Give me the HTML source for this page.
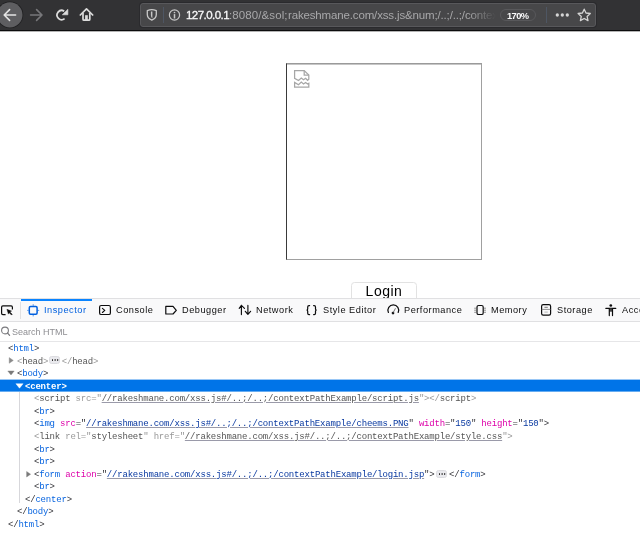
<!DOCTYPE html>
<html><head><meta charset="utf-8">
<style>
*{margin:0;padding:0;box-sizing:border-box}
html,body{width:640px;height:558px;overflow:hidden;background:#fff;font-family:"Liberation Sans",sans-serif;position:relative}
.abs{position:absolute}
#tb{left:0;top:0;width:640px;height:30px;background:#323234}
#tbline{left:0;top:30px;width:640px;height:1px;background:#0c0c0d}
#urlbar{left:140px;top:3px;width:456px;height:24px;background:#474749;border:1px solid #58585b;border-radius:3px}
.urltxt{font-size:11.5px;white-space:nowrap;line-height:14px;will-change:transform}
#dt{left:0;top:298px;width:640px;height:260px;background:#fff}
#dttb{left:0;top:298px;width:640px;height:24px;background:#f9f9fa;border-top:1px solid #e0e0e2;border-bottom:1px solid #e0e0e2}
.tab{position:absolute;will-change:transform;top:305.2px;font-size:9.2px;letter-spacing:0.52px;line-height:10px;color:#0c0c0d;white-space:nowrap}
.mk{position:absolute;will-change:transform;font-family:"Liberation Mono",monospace;font-size:9px;letter-spacing:-0.2px;white-space:nowrap;line-height:12px;color:#38383d}
.t{color:#0a66e0}
.an{color:#dd00a9}
.av{color:#0838a0}
.ul{text-decoration:underline;text-decoration-color:rgba(120,120,140,0.75)}
.nd{color:#999}
.badge{width:11px;height:8px;border:1px solid #dcdce0;border-radius:2.5px;background:#e9e9ed}
.badge::after{content:"";position:absolute;left:1.9px;top:2.4px;width:1.5px;height:1.5px;background:#222;border-radius:50%;box-shadow:2.6px 0 0 #222,5.2px 0 0 #222}
.nd .tg{color:#555}
.nd .av{color:#555}
</style></head><body>
<!-- browser toolbar -->
<div class="abs" id="tb"></div>
<div class="abs" id="tbline"></div>
<div class="abs" style="left:0;top:31px;width:640px;height:1px;background:#b4b4b4"></div>
<svg class="abs" style="left:0;top:0" width="140" height="30" viewBox="0 0 140 30">
  <circle cx="9.9" cy="14.8" r="13.4" fill="#202022"/>
  <circle cx="9.9" cy="14.8" r="12.6" fill="#5e5e61"/>
  <path d="M15.6 15 H4.6 M9.6 9.6 L4.2 15 L9.6 20.4" stroke="#e4e4e4" stroke-width="1.6" fill="none" stroke-linecap="round" stroke-linejoin="round"/>
  <path d="M30.6 15 H41.6 M36.6 9.6 L42 15 L36.6 20.4" stroke="#77777a" stroke-width="1.6" fill="none" stroke-linecap="round" stroke-linejoin="round"/>
  <path d="M64.6 18.6 A4.6 4.6 0 1 1 64.2 11.2" stroke="#dcdcdc" stroke-width="1.7" fill="none"/>
  <path d="M67.9 9.3 V14.8 H62.3 Z" fill="#dcdcdc" stroke="#dcdcdc" stroke-width="0.6" stroke-linejoin="round"/>
  <path d="M80.3 15 L86.5 8.8 L92.7 15" stroke="#dcdcdc" stroke-width="1.7" fill="none" stroke-linecap="round" stroke-linejoin="round"/>
  <path d="M83 13 V19.2 Q83 20.2 84 20.2 H88.8 Q89.8 20.2 89.8 19.2 V13" stroke="#dcdcdc" stroke-width="1.7" fill="none"/>
  <rect x="85.1" y="15.2" width="2.7" height="5" fill="#dcdcdc"/>
</svg>
<div class="abs" style="left:139px;top:2px;width:458px;height:26px;border-radius:4px;background:#2a2a2d"></div>
<div class="abs" id="urlbar"></div>
<svg class="abs" style="left:140px;top:0" width="60" height="30" viewBox="140 0 60 30">
  <path d="M151.8 9.6 Q154 9.6 156.3 10.6 V14.6 Q156.3 18.4 151.8 20.2 Q147.3 18.4 147.3 14.6 V10.6 Q149.6 9.6 151.8 9.6 Z" stroke="#c8c8c8" stroke-width="1.3" fill="none" stroke-linejoin="round"/>
  <path d="M150.9 11.6 Q151.6 11.4 152.4 11.6 V18.4 Q150.9 17.4 150.9 15 Z" fill="#c8c8c8"/>
  <rect x="163" y="7" width="1" height="16" fill="#4e5663"/>
  <circle cx="174.5" cy="15" r="5.1" stroke="#c8c8c8" stroke-width="1.2" fill="none"/>
  <rect x="173.75" y="14.1" width="1.5" height="4.4" fill="#c8c8c8"/>
  <circle cx="174.5" cy="12.5" r="0.85" fill="#c8c8c8"/>
</svg>
<div class="abs" style="left:186px;top:0;width:312px;height:30px;overflow:hidden;-webkit-mask-image:linear-gradient(to right,#000 282px,transparent 310px)">
<div class="abs urltxt" style="left:0.3px;top:7.5px;color:#f9f9fa;letter-spacing:-0.55px;-webkit-text-stroke:0.3px #f9f9fa">127.0.0.1</div>
<div class="abs urltxt" style="left:42.8px;top:7.5px;color:#a8a8aa;letter-spacing:0.1px">:8080/&amp;sol;</div>
<div class="abs urltxt" style="left:101.75px;top:7.5px;color:#a8a8aa;letter-spacing:-0.15px">rakeshmane.com/xss.js&amp;num;/..;/..;/contextPathExample</div>
</div>
<div class="abs" style="left:500px;top:9px;width:36px;height:12px;border:1px solid #58585b;border-radius:6px"></div>
<div class="abs urltxt" style="left:500px;top:8.5px;width:36px;text-align:center;color:#f9f9fa;font-size:9.3px;font-weight:bold;letter-spacing:-0.55px;text-indent:-0.5px">170%</div>
<div class="abs" style="left:546px;top:7px;width:1px;height:16px;background:#4e5663"></div>
<svg class="abs" style="left:550px;top:0" width="46" height="30" viewBox="550 0 46 30">
  <circle cx="557.3" cy="15" r="1.65" fill="#d4d4d4"/>
  <circle cx="562.3" cy="15" r="1.65" fill="#d4d4d4"/>
  <circle cx="567.3" cy="15" r="1.65" fill="#d4d4d4"/>
  <path d="M584.2 9.2 L586 13 L590.3 13.5 L587.1 16.4 L588 20.6 L584.2 18.5 L580.4 20.6 L581.3 16.4 L578.1 13.5 L582.4 13 Z" stroke="#d4d4d4" stroke-width="1.3" fill="none" stroke-linejoin="round"/>
</svg>
<!-- page -->
<div class="abs" style="left:286px;top:63px;width:196px;height:197px;border-style:solid;border-width:1px;border-color:#9a9a9a #a0a0a0 #a0a0a0 #3a3a3a"></div>
<div class="abs" style="left:287px;top:64px;width:194px;height:1px;background:#c6c6c6"></div>
<svg class="abs" style="left:290px;top:66px" width="24" height="26" viewBox="290 66 24 26">
  <g stroke="#a6a6a6" stroke-width="1.25" fill="none" stroke-linejoin="miter">
  <path d="M294.6 78.4 V70.6 H304.2 L308.8 75 V79.2 L307.6 80.3 L305.6 78.3 L303.5 79.8 L301.3 78 L298.5 80.5 Z"/>
  <path d="M304.2 70.6 V75.1 H308.8"/>
  <path d="M294.6 87.2 V82.4 L298.5 84.7 L301.3 82.1 L303.5 83.9 L305.6 82.5 L307.6 84.1 L308.8 83.3 V87.2 Z"/>
  </g>
</svg>
<div class="abs" style="left:351px;top:282px;width:66px;height:24px;border:1px solid #e2e2e2;border-radius:3.5px;background:#fff"></div>
<div class="abs" style="left:351px;top:283px;width:66px;text-align:center;font-size:14px;line-height:16px;color:#000;letter-spacing:0.5px;will-change:transform">Login</div>

<!-- devtools -->
<div class="abs" id="dt"></div>
<div class="abs" id="dttb"></div>
<div class="abs" style="left:21px;top:299px;width:71px;height:2px;background:#0a84ff"></div>
<div class="abs" style="left:20px;top:302px;width:1px;height:17px;background:#e0e0e2"></div>

<svg class="abs" style="left:0;top:298px" width="640" height="23" viewBox="0 298 640 23">
  <!-- picker -->
  <path d="M5.6 314.6 H2.9 Q1.6 314.6 1.6 313.3 V307.2 Q1.6 305.9 2.9 305.9 H11.1 Q12.4 305.9 12.4 307.2 V309.6" stroke="#0c0c0d" stroke-width="1.2" fill="none"/>
  <path d="M6.9 309.3 L11.6 311.1 L9.9 311.9 L12.3 314.3 L11.5 315.1 L9.1 312.7 L8.4 314.1 Z" fill="#0c0c0d" stroke="#0c0c0d" stroke-width="0.4" stroke-linejoin="round"/>
  <!-- inspector -->
  <rect x="29.3" y="306.6" width="7.8" height="7.6" rx="1.2" stroke="#0060df" stroke-width="1.5" fill="none"/>
  <path d="M33.2 304.2 V305.9 M33.2 314.9 V316.4 M27.2 310.4 H28.6 M37.8 310.4 H39.2" stroke="#0060df" stroke-width="0.9" opacity="0.7"/>
  <!-- console -->
  <rect x="99.6" y="305.5" width="10.8" height="9" rx="1.6" stroke="#0c0c0d" stroke-width="1.2" fill="none"/>
  <path d="M102.4 308.4 L104.8 310.4 L102.4 312.5" stroke="#0c0c0d" stroke-width="1.1" fill="none" stroke-linecap="round" stroke-linejoin="round"/>
  <!-- debugger -->
  <path d="M165.8 306.4 H173 L176.3 310.3 L173 314 H165.8 Z" stroke="#0c0c0d" stroke-width="1.2" fill="none" stroke-linejoin="round"/>
  <!-- network -->
  <path d="M241.4 314.6 V305.4 M239.2 308.3 L241.4 305.4 L244.5 308.3" stroke="#0c0c0d" stroke-width="1.15" fill="none" stroke-linecap="round" stroke-linejoin="round"/>
  <path d="M247.9 305.4 V314.2 M245.3 311.3 L247.9 314.3 L250.6 311.3" stroke="#0c0c0d" stroke-width="1.15" fill="none" stroke-linecap="round" stroke-linejoin="round"/>
  <!-- braces -->
  <path d="M309.6 305.6 H309 Q307.7 305.6 307.7 306.9 V309.1 Q307.7 310.1 306.6 310.1 Q307.7 310.1 307.7 311.1 V313.3 Q307.7 314.6 309 314.6 H309.6" stroke="#0c0c0d" stroke-width="1.2" fill="none" stroke-linecap="round"/>
  <path d="M313.6 305.6 H314.2 Q315.5 305.6 315.5 306.9 V309.1 Q315.5 310.1 316.6 310.1 Q315.5 310.1 315.5 311.1 V313.3 Q315.5 314.6 314.2 314.6 H313.6" stroke="#0c0c0d" stroke-width="1.2" fill="none" stroke-linecap="round"/>
  <!-- performance -->
  <path d="M388.4 312.5 A5.4 5.4 0 1 1 398.2 312.5" stroke="#0c0c0d" stroke-width="1.2" fill="none" stroke-linecap="round"/>
  <circle cx="393" cy="313.1" r="1.35" fill="#0c0c0d"/>
  <path d="M393 313 L395.3 308.6" stroke="#555" stroke-width="0.8" stroke-linecap="round"/>
  <!-- memory -->
  <rect x="477" y="305.5" width="6.2" height="9" rx="1.6" stroke="#0c0c0d" stroke-width="1.2" fill="none"/>
  <path d="M474.2 308.2 H476.4 M474.2 310.2 H476.4 M474.2 312.3 H476.4 M483.8 308.2 H486 M483.8 310.2 H486 M483.8 312.3 H486" stroke="#666" stroke-width="0.7"/>
  <!-- storage -->
  <rect x="541.6" y="304.7" width="9" height="10.4" rx="1.6" stroke="#0c0c0d" stroke-width="1.2" fill="none"/>
  <path d="M541.6 309.4 H550.6" stroke="#777" stroke-width="0.8"/>
  <path d="M544.8 307.3 H547.4" stroke="#555" stroke-width="0.8" stroke-linecap="round"/>
  <path d="M544.8 312.1 H547.4" stroke="#aaa" stroke-width="0.8" stroke-linecap="round"/>
  <!-- accessibility -->
  <circle cx="610.8" cy="305.5" r="1.35" fill="#0c0c0d"/>
  <path d="M605.9 308.4 H615.7" stroke="#0c0c0d" stroke-width="1.3" stroke-linecap="round"/>
  <rect x="609.3" y="308.4" width="3.2" height="3.3" fill="#444"/>
  <path d="M609.3 308.6 V315.6 M612.5 308.6 V315.6" stroke="#0c0c0d" stroke-width="1.2" stroke-linecap="round"/>
</svg>
<div class="tab" style="left:43.5px;color:#0060df">Inspector</div>
<div class="tab" style="left:116px">Console</div>
<div class="tab" style="left:182px">Debugger</div>
<div class="tab" style="left:256px">Network</div>
<div class="tab" style="left:323px">Style Editor</div>
<div class="tab" style="left:404px">Performance</div>
<div class="tab" style="left:491px">Memory</div>
<div class="tab" style="left:557px">Storage</div>
<div class="tab" style="left:622px">Accessibility</div>

<!-- search -->
<div class="abs" style="left:0;top:322px;width:640px;height:20px;background:#fff;border-bottom:1px solid #e6e6e8"></div>
<svg class="abs" style="left:0;top:324px" width="14" height="14" viewBox="0 324 14 14">
  <circle cx="5" cy="330.5" r="3.4" stroke="#7a7a7e" stroke-width="1.1" fill="none"/>
  <path d="M7.5 333 L9.6 335.3" stroke="#7a7a7e" stroke-width="1.2" stroke-linecap="round"/>
</svg>
<div class="abs" style="left:12px;top:326.5px;font-size:9px;line-height:10px;color:#8e8e92;will-change:transform">Search HTML</div>

<!-- markup -->
<div class="abs" style="left:0;top:380px;width:640px;height:11px;background:#0074e8"></div>
<div class="abs" style="left:0;top:379px;width:640px;height:1px;background:rgba(0,116,232,0.4)"></div>
<div class="abs" style="left:0;top:391px;width:640px;height:1px;background:rgba(0,116,232,0.6)"></div>
<div class="abs" style="left:19px;top:392px;width:1px;height:111px;background:#d7d7db"></div>

<div class="mk" style="left:8px;top:343px">&lt;<span class="t">html</span>&gt;</div>
<div class="mk nd" style="left:17px;top:356px">&lt;<span class="tg">head</span>&gt;<span style="display:inline-block;width:13.5px"></span>&lt;/<span class="tg">head</span>&gt;</div>
<div class="mk" style="left:17px;top:368px">&lt;<span class="t">body</span>&gt;</div>
<div class="mk" style="left:25px;top:381px;color:#fff;font-weight:bold">&lt;center&gt;</div>
<div class="mk nd" style="left:34px;top:393px">&lt;<span class="tg">script</span> src=&quot;<span class="av ul">//rakeshmane.com/xss.js#/..;/..;/contextPathExample/script.js</span>&quot;&gt;&lt;/<span class="tg">script</span>&gt;</div>
<div class="mk" style="left:34px;top:406px">&lt;<span class="t">br</span>&gt;</div>
<div class="mk" style="left:34px;top:418px">&lt;<span class="t">img</span> <span class="an">src</span>=&quot;<span class="av ul">//rakeshmane.com/xss.js#/..;/..;/contextPathExample/cheems.PNG</span>&quot; <span class="an">width</span>=&quot;<span class="av">150</span>&quot; <span class="an">height</span>=&quot;<span class="av">150</span>&quot;&gt;</div>
<div class="mk nd" style="left:34px;top:431px">&lt;<span class="tg">link</span> rel=&quot;<span class="av">stylesheet</span>&quot; href=&quot;<span class="av ul">//rakeshmane.com/xss.js#/..;/..;/contextPathExample/style.css</span>&quot;&gt;</div>
<div class="mk" style="left:34px;top:444px">&lt;<span class="t">br</span>&gt;</div>
<div class="mk" style="left:34px;top:456px">&lt;<span class="t">br</span>&gt;</div>
<div class="mk" style="left:34px;top:469px">&lt;<span class="t">form</span> <span class="an">action</span>=&quot;<span class="av ul">//rakeshmane.com/xss.js#/..;/..;/contextPathExample/login.jsp</span>&quot;&gt;<span style="display:inline-block;width:14.6px"></span>&lt;/<span class="t">form</span>&gt;</div>
<div class="mk" style="left:34px;top:481px">&lt;<span class="t">br</span>&gt;</div>
<div class="mk" style="left:25px;top:494px">&lt;/<span class="t">center</span>&gt;</div>
<div class="mk" style="left:17px;top:506px">&lt;/<span class="t">body</span>&gt;</div>
<div class="mk" style="left:8px;top:519px">&lt;/<span class="t">html</span>&gt;</div>

<div class="abs badge" style="left:49px;top:356px"></div>
<div class="abs badge" style="left:436px;top:470px"></div>
<svg class="abs" style="left:0;top:340px" width="40" height="140" viewBox="0 340 40 140">
  <path d="M9.2 357.6 L13.3 360.4 L9.2 363.3 Z" fill="#8a8a8a" stroke="#8a8a8a" stroke-width="0.4" stroke-linejoin="round"/>
  <path d="M7.8 371 L14.2 371 L11 374.9 Z" fill="#7a7a7a" stroke="#7a7a7a" stroke-width="0.4" stroke-linejoin="round"/>
  <path d="M15.9 383.7 L23.1 383.7 L19.5 388.2 Z" fill="#fff" stroke="#fff" stroke-width="0.4" stroke-linejoin="round"/>
  <path d="M26.6 471.5 L30.6 474.2 L26.6 477 Z" fill="#7a7a7a" stroke="#7a7a7a" stroke-width="0.4" stroke-linejoin="round"/>
</svg>
</body></html>
